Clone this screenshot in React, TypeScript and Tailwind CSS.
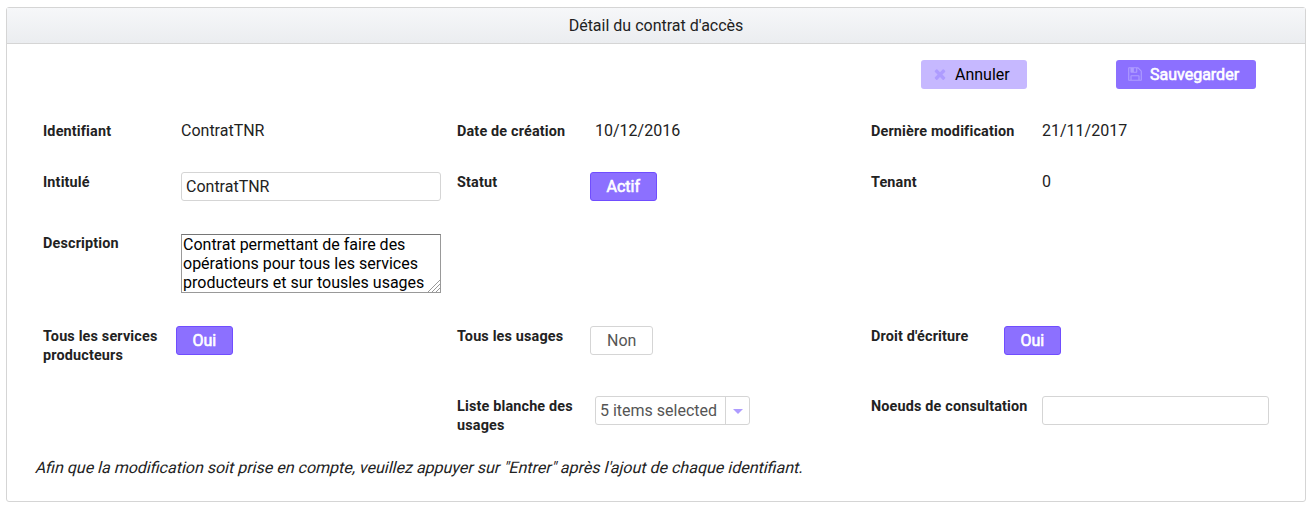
import type { ReactNode } from "react";

function CloseIcon() {
  return (
    <svg viewBox="0 0 1792 1792" className="mb-px size-4 shrink-0" fill="currentColor">
      <path d="M1490 1322q0 40-28 68l-136 136q-28 28-68 28t-68-28l-294-294-294 294q-28 28-68 28t-68-28l-136-136q-28-28-28-68t28-68l294-294-294-294q-28-28-28-68t28-68l136-136q28-28 68-28t68 28l294 294 294-294q28-28 68-28t68 28l136 136q28 28 28 68t-28 68l-294 294 294 294q28 28 28 68z" />
    </svg>
  );
}

function SaveIcon() {
  return (
    <svg viewBox="0 0 1792 1792" className="mb-px size-4 shrink-0" fill="currentColor">
      <path d="M512 1536h768v-384h-768v384zm896 0h128v-896q0-14-10-38.500t-20-34.500l-281-281q-10-10-34-20t-39-10v416q0 40-28 68t-68 28h-576q-40 0-68-28t-28-68v-416h-128v1280h128v-416q0-40 28-68t68-28h832q40 0 68 28t28 68v416zm-384-928v-320q0-13-9.500-22.500t-22.500-9.500h-192q-13 0-22.500 9.500t-9.500 22.500v320q0 13 9.500 22.500t22.500 9.500h192q13 0 22.500-9.500t9.500-22.500zm640 32v928q0 40-28 68t-68 28h-1344q-40 0-68-28t-28-68v-1344q0-40 28-68t68-28h928q40 0 88 20t76 48l280 280q28 28 48 76t20 88z" />
    </svg>
  );
}

function Field({ label, wide, flush, children }: { label: string; wide?: boolean; flush?: boolean; children?: ReactNode }) {
  return (
    <div className="flex items-start">
      <label
        className={`${wide ? "w-[171px]" : "w-[138px]"} ${flush ? "pt-0" : "pt-px"} shrink-0 pr-3 text-[14.4px] leading-[19px] font-bold tracking-[0.16px]`}
      >
        {label}
      </label>
      {children}
    </div>
  );
}

function Value({ children }: { children: ReactNode }) {
  return <span className="leading-[19px]">{children}</span>;
}

function Toggle({ on, wide, children }: { on?: boolean; wide?: boolean; children: ReactNode }) {
  const tone = on
    ? "border-[#704dff] bg-[#8c70ff] px-[15.5px] text-white [-webkit-text-stroke:0.6px_white]"
    : "border-[#d5d5d5] bg-white px-4 text-[#555]";
  return (
    <button className={`${wide ? "-ml-[38px]" : "-ml-[5px]"} h-[29px] rounded-[3px] border leading-[27px] ${tone}`}>
      {children}
    </button>
  );
}

const row = "grid grid-cols-[414px_414px_1fr]";

export default function App() {
  return (
    <main className="h-[511px] bg-white pt-[7px] pl-[6px] font-['Roboto',sans-serif] text-base text-[#222]">
      <section className="h-[495px] w-[1300px] rounded-[3px] border border-[#d5d5d5]">
        <header className="flex h-9 items-center justify-center border-b border-[#d5d5d5] bg-linear-to-b from-[#f6f7f9] to-[#ebedf0]">
          Détail du contrat d'accès
        </header>

        <div className="mt-4 flex justify-end gap-[89px] pr-[49px]">
          <button className="flex h-[29px] w-[106px] items-center rounded-[3px] bg-[#c6b8ff] pl-[11px] text-black">
            <span className="text-[#ae9cff]"><CloseIcon /></span>
            <span className="ml-[7px]">Annuler</span>
          </button>
          <button className="flex h-[29px] w-[140px] items-center rounded-[3px] bg-[#8c70ff] pl-[11px] text-white">
            <span className="text-[#ae9cff]"><SaveIcon /></span>
            <span className="ml-[7px] [-webkit-text-stroke:0.6px_white]">Sauvegarder</span>
          </button>
        </div>

        <div className="mt-8 pl-9">
          <div className={`${row} h-[51px]`}>
            <Field label="Identifiant"><Value>ContratTNR</Value></Field>
            <Field label="Date de création"><Value>10/12/2016</Value></Field>
            <Field label="Dernière modification" wide><Value>21/11/2017</Value></Field>
          </div>
          <div className={`${row} h-[62px]`}>
            <Field label="Intitulé">
              <input
                defaultValue="ContratTNR"
                className="h-[29px] w-[260px] rounded-[3px] border border-[#d5d5d5] px-1 outline-none"
              />
            </Field>
            <Field label="Statut"><Toggle on>Actif</Toggle></Field>
            <Field label="Tenant" wide><Value>0</Value></Field>
          </div>
          <div className={`${row} h-[92px]`}>
            <Field label="Description" flush>
              <div className="relative">
                <textarea
                  defaultValue="Contrat permettant de faire des opérations pour tous les services producteurs et sur tousles usages"
                  className="block h-[59px] w-[260px] resize-none overflow-hidden border border-[#999] border-t-[#767676] px-px leading-[19px] text-black outline-none"
                />
                <svg viewBox="0 0 12 12" className="pointer-events-none absolute right-px bottom-px size-3" stroke="#999" strokeWidth="1" fill="none">
                  <path d="M0 12L12 0M4 12L12 4M8 12L12 8" />
                </svg>
              </div>
            </Field>
          </div>
          <div className={`${row} h-[70px]`}>
            <Field label="Tous les services producteurs"><Toggle on>Oui</Toggle></Field>
            <Field label="Tous les usages"><Toggle>Non</Toggle></Field>
            <Field label="Droit d'écriture" wide><Toggle on wide>Oui</Toggle></Field>
          </div>
          <div className={`${row} h-[62px]`}>
            <div />
            <Field label="Liste blanche des usages">
              <div className="flex h-[29px] w-[155px] rounded-[3px] border border-[#d5d5d5] text-[#555]">
                <span className="w-[130px] border-r border-[#d5d5d5] pl-1 leading-[27px]">5 items selected</span>
                <span className="flex flex-1 items-center justify-center text-[#ae9cff]">
                  <svg viewBox="0 0 10 5" className="mt-[2px] h-[5px] w-[10px]" fill="currentColor">
                    <path d="M0 0h10L5 5z" />
                  </svg>
                </span>
              </div>
            </Field>
            <Field label="Noeuds de consultation" wide>
              <input className="h-[29px] w-[227px] rounded-[3px] border border-[#d5d5d5] px-1 outline-none" />
            </Field>
          </div>
        </div>
        <p className="ml-[29px] w-fit -skew-x-[14deg] leading-[19px]">
          Afin que la modification soit prise en compte, veuillez appuyer sur "Entrer" après l'ajout de chaque identifiant.
        </p>
      </section>
    </main>
  );
}
